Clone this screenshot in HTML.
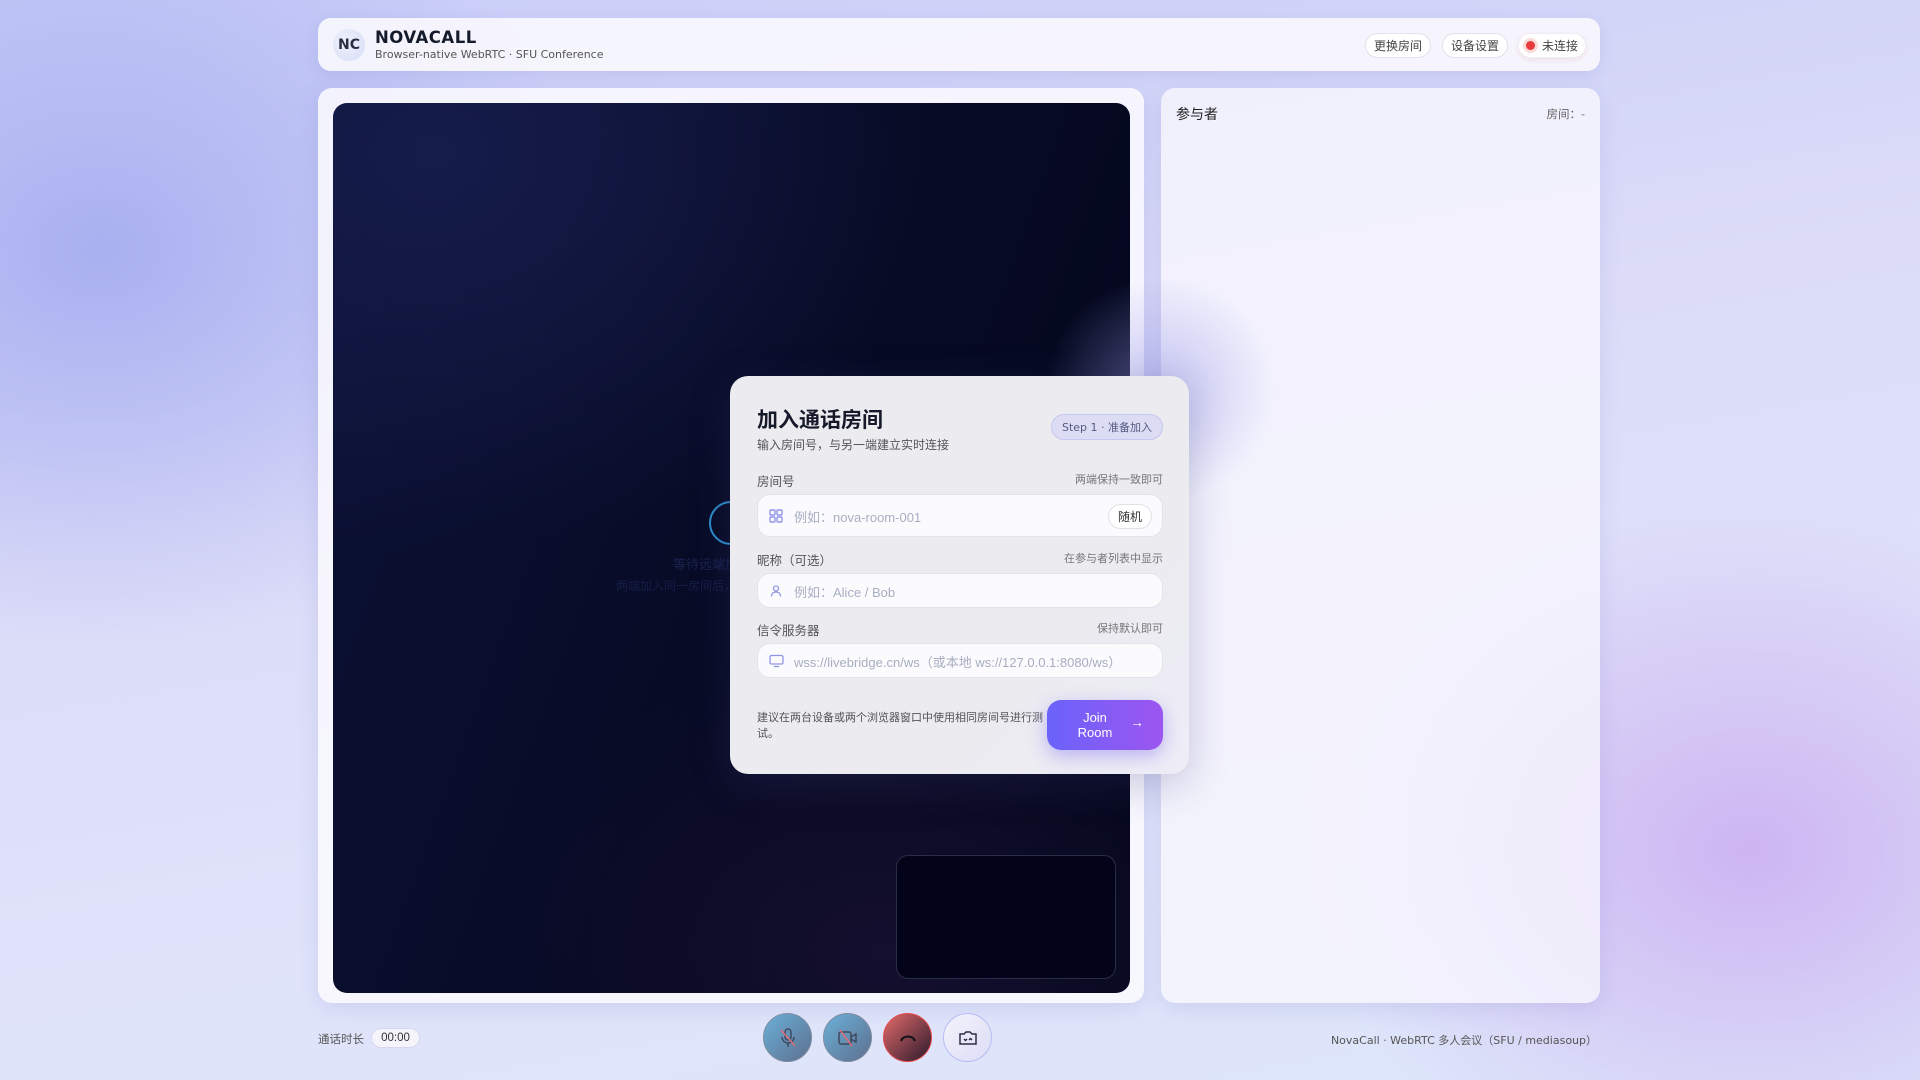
<!DOCTYPE html>
<html><head><meta charset="utf-8"><style>
*{box-sizing:border-box;margin:0;padding:0}
body{width:1920px;height:1080px;overflow:hidden;font-family:"Liberation Sans","DejaVu Sans","Noto Sans CJK SC",sans-serif;position:relative;
background:radial-gradient(ellipse 500px 400px at 100px 250px,#a9b0f0 0%,rgba(169,176,240,0) 100%),radial-gradient(ellipse 450px 350px at 1750px 850px,#cdb5f2 0%,rgba(205,181,242,0) 100%),linear-gradient(170deg,#c8cdf8 0%,#dcdcf8 40%,#e0e4fa 75%,#dce6fa 100%);}
.abs{position:absolute}
.header{left:318px;top:18px;width:1282px;height:53px;background:rgba(248,247,253,.92);border-radius:13px;box-shadow:0 4px 14px rgba(120,120,200,.18)}
.logo{left:15px;top:11px;width:32px;height:32px;border-radius:50%;background:radial-gradient(circle at 40% 40%,#f2f2fc,#d4dcf6);font-weight:bold;font-size:14px;color:#2a2f45;display:flex;align-items:center;justify-content:center;font-family:"DejaVu Sans",sans-serif}
.pill{position:absolute;top:15px;height:25px;border:1px solid #e2e2ee;background:#fff;border-radius:13px;font-size:12px;color:#444;display:flex;align-items:center;justify-content:center;font-family:"Noto Sans CJK SC",sans-serif}
.panel{background:rgba(250,249,254,.88);border-radius:14px;box-shadow:0 6px 20px rgba(120,120,200,.18)}
.video{left:333px;top:103px;width:797px;height:890px;border-radius:14px;background:radial-gradient(ellipse 500px 400px at 100px 50px,#161c4a 0%,rgba(22,28,74,0) 100%),radial-gradient(ellipse 400px 300px at 550px 850px,#140f2e 0%,rgba(20,15,46,0) 100%),linear-gradient(110deg,#0c1238 0%,#070b25 50%,#03061a 100%)}
.modal{left:730px;top:376px;width:459px;height:398px;border-radius:18px;background:linear-gradient(135deg,#ececf0 0%,#ebebf0 70%,#eeedf7 100%);box-shadow:0 10px 40px rgba(60,60,120,.25);font-family:"DejaVu Sans","Noto Sans CJK SC",sans-serif}
.lbl{position:absolute;left:27px;font-size:12.5px;color:#555}
.hint{position:absolute;right:26px;font-size:11px;color:#777}
.inp{position:absolute;left:27px;width:406px;height:43px;background:#fbfbfd;border:1px solid #e3e3ea;border-radius:13px;font-size:13px;color:#a8adc2;font-family:"Liberation Sans","Noto Sans CJK SC",sans-serif}
.inp span{position:absolute;left:36px;top:12px}
.inp svg{position:absolute;left:11px;top:14px}
.btn{position:absolute;width:49px;height:49px;border-radius:50%;top:1013px;display:flex;align-items:center;justify-content:center}
</style></head><body>
<div class="abs header">
 <div class="abs logo">NC</div>
 <div class="abs" style="left:57px;top:10px;font-size:16.5px;font-weight:bold;color:#141a2a;letter-spacing:.5px;font-family:'DejaVu Sans',sans-serif">NOVACALL</div>
 <div class="abs" style="left:57px;top:30px;font-size:11px;color:#555;font-family:'DejaVu Sans',sans-serif">Browser-native WebRTC · SFU Conference</div>
 <div class="pill" style="left:1047px;width:66px">更换房间</div>
 <div class="pill" style="left:1124px;width:66px">设备设置</div>
 <div class="pill" style="left:1200px;width:68px;border-color:#f0eef5;box-shadow:0 2px 6px rgba(200,100,120,.15)"><span style="width:9px;height:9px;border-radius:50%;background:#e83a3a;box-shadow:0 0 0 3px #fbdada;margin-right:7px"></span>未连接</div>
</div>
<div class="abs panel" style="left:318px;top:88px;width:826px;height:915px"></div>
<div class="abs video">
 <div class="abs" style="left:376px;top:398px;width:44px;height:44px;border-radius:50%;border:2px solid #2d8ccc"></div>
 <div class="abs" style="left:340px;top:451px;font-size:13px;color:#1a2350;font-family:'Noto Sans CJK SC',sans-serif">等待远端加入</div>
 <div class="abs" style="left:283px;top:474px;font-size:12px;color:#161e48;font-family:'Noto Sans CJK SC',sans-serif">两端加入同一房间后，视频</div>
 <div class="abs" style="left:563px;top:752px;width:220px;height:124px;border-radius:12px;background:#03041a;border:1px solid #2a2d48"></div>
</div>
<div class="abs panel" style="left:1161px;top:88px;width:439px;height:915px;background:rgba(248,246,254,.8)">
 <div class="abs" style="left:15px;top:16px;font-size:14px;color:#222;font-family:'Noto Sans CJK SC',sans-serif">参与者</div>
 <div class="abs" style="right:15px;top:18px;font-size:11.5px;color:#666;font-family:'Noto Sans CJK SC',sans-serif">房间：-</div>
</div>
<div class="abs" style="left:1040px;top:280px;width:240px;height:220px;border-radius:50%;background:radial-gradient(circle,rgba(150,150,230,.5),rgba(150,150,230,0) 70%)"></div>
<div class="abs modal">
 <div class="abs" style="left:27px;top:28px;font-size:21px;font-weight:bold;color:#15192a;font-family:'Noto Sans CJK SC',sans-serif">加入通话房间</div>
 <div class="abs" style="left:27px;top:60px;font-size:12px;color:#555">输入房间号，与另一端建立实时连接</div>
 <div class="abs" style="left:321px;top:38px;width:112px;height:26px;border-radius:13px;background:#dcdcf4;border:1px solid #c6c8f0;font-size:11px;color:#555a80;display:flex;align-items:center;justify-content:center">Step 1 · 准备加入</div>
 <div class="lbl" style="top:95px">房间号</div><div class="hint" style="top:95px">两端保持一致即可</div>
 <div class="inp" style="top:118px"><svg width="14" height="14" viewBox="0 0 14 14" fill="none" stroke="#8f94e8" stroke-width="1.4"><rect x="1" y="1" width="5" height="5" rx="1"/><rect x="8" y="1" width="5" height="5" rx="1"/><rect x="1" y="8" width="5" height="5" rx="1"/><rect x="8" y="8" width="5" height="5" rx="1"/></svg><span>例如：nova-room-001</span>
  <div class="abs" style="right:10px;top:9px;width:44px;height:25px;border:1px solid #e0e0e8;border-radius:13px;background:#fff;font-size:12px;color:#333;display:flex;align-items:center;justify-content:center">随机</div></div>
 <div class="lbl" style="top:174px">昵称（可选）</div><div class="hint" style="top:174px">在参与者列表中显示</div>
 <div class="inp" style="top:197px;height:35px"><svg width="14" height="14" viewBox="0 0 14 14" fill="none" stroke="#8f94e8" stroke-width="1.3" style="top:10px"><circle cx="7" cy="4.5" r="2.5"/><path d="M2.5 12.5c0-3 2-4.5 4.5-4.5s4.5 1.5 4.5 4.5"/></svg><span style="top:8px">例如：Alice / Bob</span></div>
 <div class="lbl" style="top:244px">信令服务器</div><div class="hint" style="top:244px">保持默认即可</div>
 <div class="inp" style="top:267px;height:35px"><svg width="15" height="14" viewBox="0 0 15 14" fill="none" stroke="#8f94e8" stroke-width="1.3" style="top:10px"><rect x="1" y="1.5" width="13" height="8.5" rx="1.5"/><path d="M5 12.5h5"/></svg><span style="top:8px">wss://livebridge.cn/ws（或本地 ws://127.0.0.1:8080/ws）</span></div>
 <div class="abs" style="left:27px;top:334px;width:290px;font-size:11px;line-height:16px;color:#555">建议在两台设备或两个浏览器窗口中使用相同房间号进行测试。</div>
 <div class="abs" style="left:317px;top:324px;width:116px;height:50px;border-radius:14px;background:linear-gradient(90deg,#6a63fa,#9d55f0);box-shadow:0 6px 18px rgba(110,90,240,.4);color:#fff;font-size:13px;line-height:15px;font-family:'Liberation Sans',sans-serif">
  <div class="abs" style="left:18px;top:10px;width:60px;text-align:center">Join<br>Room</div>
  <div class="abs" style="left:83px;top:15px;font-size:14px">→</div></div>
</div>
<div class="abs" style="left:318px;top:1031px;font-size:11.5px;color:#555;font-family:'Noto Sans CJK SC',sans-serif">通话时长</div>
<div class="abs" style="left:371px;top:1028px;width:49px;height:20px;border-radius:10px;background:#f4f4fa;border:1px solid #d6d8f2;font-size:11.5px;color:#333;display:flex;align-items:center;justify-content:center">00:00</div>
<div class="btn" style="left:763px;background:linear-gradient(135deg,#6bb0d8,#5d6f8e);border:1px solid #7f8ca0"><svg width="20" height="22" viewBox="0 0 20 22" fill="none" stroke="#3e4a60" stroke-width="1.5"><rect x="7" y="2" width="6" height="11" rx="3"/><path d="M4 10a6 6 0 0 0 12 0M10 16v4"/><path d="M3 3l14 16" stroke="#e06a78"/></svg></div>
<div class="btn" style="left:823px;background:linear-gradient(135deg,#6bb0d8,#5d6f8e);border:1px solid #7f8ca0"><svg width="22" height="20" viewBox="0 0 22 20" fill="none" stroke="#3e4a60" stroke-width="1.5"><rect x="2" y="4" width="12" height="12" rx="2"/><path d="M14 9l5-3v8l-5-3"/><path d="M3 2l12 16" stroke="#e06a78"/></svg></div>
<div class="btn" style="left:883px;background:linear-gradient(135deg,#e46a6a,#2a1a2c);border:1px solid #e24a4a"><svg width="20" height="12" viewBox="0 0 20 12" fill="none" stroke="#101018" stroke-width="2"><path d="M3 9C5 3 15 3 17 9"/></svg></div>
<div class="btn" style="left:943px;background:linear-gradient(135deg,#f4f4fc,#dcdcf6);border:1px solid #b8bcf4"><svg width="20" height="16" viewBox="0 0 20 16" fill="none" stroke="#2a2f45" stroke-width="1.5"><path d="M2 4h4l2-2h4l2 2h4v10H2z"/><path d="M6 9l1.5 1.5L9 9M11 10l1.5-1.5L14 10"/></svg></div>
<div class="abs" style="right:323px;top:1032px;font-size:11px;color:#555;font-family:'DejaVu Sans','Noto Sans CJK SC',sans-serif">NovaCall · WebRTC 多人会议（SFU / mediasoup）</div>
</body></html>
